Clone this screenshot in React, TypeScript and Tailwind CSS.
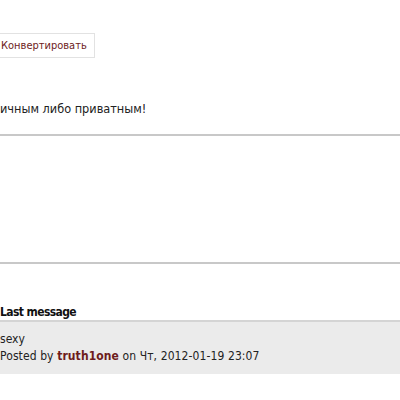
export default function App() {
  return (
    <div className="w-[400px] h-[400px] overflow-hidden bg-white text-[12px] text-[#222] font-['DejaVu_Sans_Condensed','DejaVu_Sans',sans-serif]">
      <div className="pt-[33px]">
        <button className="-ml-[8px] h-[25px] w-[103px] px-[8px] border border-[#e2e2e2] bg-white text-[11px] text-[#6e1c1c] leading-none text-left">
          Конвертировать
        </button>
      </div>
      <p className="mt-[43px] text-[12.6px] leading-[16px]">ичным либо приватным!</p>
      <div className="mt-[17px] h-[2px] bg-[#c8c8c8]" />
      <div className="h-[126px]" />
      <div className="h-[2px] bg-[#c8c8c8]" />
      <div className="pt-[40px]">
        <h3 className="font-bold leading-[16px] tracking-[-0.6px] text-[#111]">Last message</h3>
        <div className="border-t-2 border-[#d4d4d4] bg-[#ebebeb] pt-[9px] pb-[9px] leading-[17px]">
          <div>sexy</div>
          <div className="tracking-[0.1px]">
            Posted by <span className="font-bold text-[#6e1c1c]">truth1one</span> on Чт, 2012-01-19 23:07
          </div>
        </div>
      </div>
    </div>
  );
}
